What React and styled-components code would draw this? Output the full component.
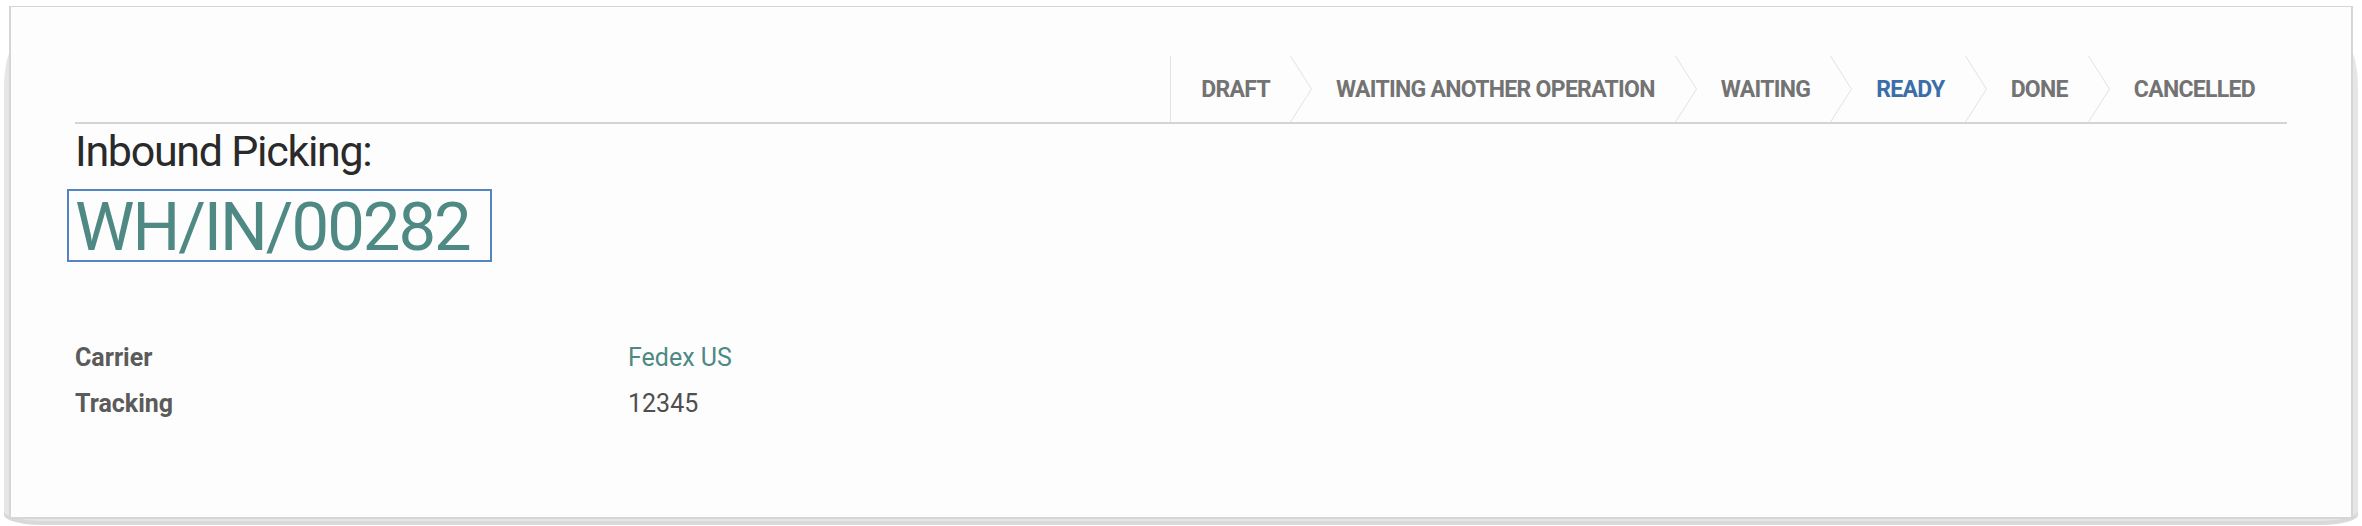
import styled, { createGlobalStyle } from 'styled-components';

const GlobalStyle = createGlobalStyle`
    body {
        margin: 0;
        background: #ffffff;
        font-family: Roboto, 'Noto Sans', sans-serif;
    }
`;

const Page = styled.div`
    padding: 6px 9px 7px;
`;

const Sheet = styled.div`
    position: relative;
    box-sizing: border-box;
    height: 513px;
    background: #fdfdfd;
    border: solid #d6d6d6;
    border-width: 1px 2px 2px;
    padding: 49px 64px 0 64px;

    /* paper shadow peeking out behind the sheet */
    &::before {
        content: '';
        position: absolute;
        inset: 44px -7px -8px -7px;
        z-index: -1;
        background: #e6e6e6;
        border-radius: 8px 8px 40px 40px / 40px 40px 10px 10px;
        box-shadow: inset 0 -4px 0 #d9d9d9;
    }
`;

const Statusbar = styled.div`
    display: flex;
    justify-content: flex-end;
    border-bottom: 2px solid #d4d4d4;
`;

const Steps = styled.div`
    display: flex;
    height: 66px;
    border-left: 1px solid #e2e2e2;
`;

const StepItem = styled.div`
    display: flex;
`;

const Step = styled.div`
    display: flex;
    align-items: center;
    padding: 0 ${({ $last }) => ($last ? '32px' : '20px')} 0 ${({ $first }) => ($first ? '30px' : '24px')};
    font-size: 23px;
    font-weight: 700;
    letter-spacing: -0.7px;
    text-transform: uppercase;
    color: ${({ $active }) => ($active ? '#3b6ea8' : '#737373')};
    white-space: nowrap;
`;

const Chevron = styled.svg`
    flex: none;
    width: 22px;
    height: 66px;
`;

const Title = styled.div`
    margin-top: 2px;
    font-size: 43px;
    line-height: 50px;
    letter-spacing: -0.03em;
    color: #2a2a2a;
`;

const NameBox = styled.div`
    box-sizing: border-box;
    width: 425px;
    margin: 13px 0 0 -8px;
    padding: 3px 0 0 6px;
    border: 2px solid #5485c0;
    font-size: 67px;
    line-height: 66px;
    letter-spacing: -0.03em;
    color: #4e8984;
`;

const Fields = styled.div`
    display: grid;
    grid-template-columns: 553px 1fr;
    margin-top: 73px;
    font-size: 25px;
    line-height: 46px;
`;

const Label = styled.div`
    font-weight: 700;
    color: #5b5b5b;
`;

const Value = styled.div`
    color: ${({ $link }) => ($link ? '#4e8984' : '#4f4f4f')};
`;

const steps = [
    { label: 'Draft' },
    { label: 'Waiting Another Operation' },
    { label: 'Waiting' },
    { label: 'Ready', active: true },
    { label: 'Done' },
    { label: 'Cancelled' },
];

export default function App() {
    return (
        <>
            <GlobalStyle />
            <Page>
                <Sheet>
                    <Statusbar>
                        <Steps>
                            {steps.map((step, i) => (
                                <StepItem key={step.label}>
                                    <Step $first={i === 0} $last={i === steps.length - 1} $active={step.active}>
                                        {step.label}
                                    </Step>
                                    {i < steps.length - 1 && (
                                        <Chevron viewBox="0 0 22 66">
                                            <polyline points="0.5,0 21.5,33 0.5,66" fill="none" stroke="#e2e2e2" strokeWidth="1" />
                                        </Chevron>
                                    )}
                                </StepItem>
                            ))}
                        </Steps>
                    </Statusbar>
                    <Title>Inbound Picking:</Title>
                    <NameBox>WH/IN/00282</NameBox>
                    <Fields>
                        <Label>Carrier</Label>
                        <Value $link>Fedex US</Value>
                        <Label>Tracking</Label>
                        <Value>12345</Value>
                    </Fields>
                </Sheet>
            </Page>
        </>
    );
}
